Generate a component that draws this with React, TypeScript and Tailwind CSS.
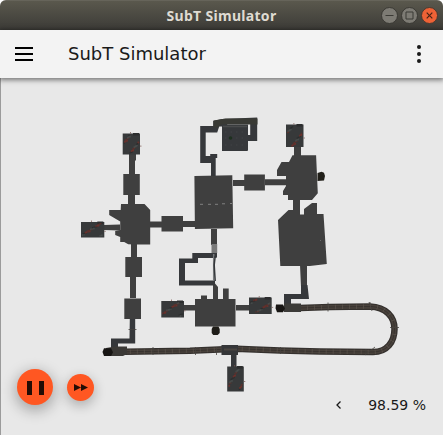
import React from "react";

const ROCK = "#3f3f3f";

// x, y, width, height of the rough cave rooms
const caves: [number, number, number, number][] = [
  [122.7, 133.5, 17.3, 21],
  [81, 222, 23.3, 15.5],
  [286, 124.5, 17.5, 22.5],
  [161.3, 301, 22.7, 16.5],
  [249, 297.5, 22.7, 16.5],
  [227.2, 366.5, 16.6, 25],
];

// Deterministic speckles inside a cave room
function Cave({ box, seed }: { box: [number, number, number, number]; seed: number }) {
  const [x, y, w, h] = box;
  const specks = Array.from({ length: 28 }, (_, i) => {
    const a = (i * 37 + seed * 17) % 101;
    const b = (i * 61 + seed * 29) % 97;
    return { px: x + 1 + (a / 101) * (w - 3), py: y + 1 + (b / 97) * (h - 3), c: ["#7a2f28", "#28292a", "#4c5150", "#66302a"][i % 4] };
  });
  return (
    <g>
      <rect x={x} y={y} width={w} height={h} fill="#37393a" />
      <rect x={x + w - 7} y={y - 0.5} width={6} height={2.5} fill="#2c2d2e" />
      {specks.map((s, i) => (
        <rect key={i} x={s.px} y={s.py} width={i % 3 ? 1.2 : 1.8} height={i % 2 ? 1.2 : 1.8} fill={s.c} opacity=".75" />
      ))}
      <path d={`M${x + w} ${y + h * 0.6}h1.5M${x + w * 0.45} ${y - 1.5}v1.5`} stroke="#7c5650" strokeWidth=".7" />
    </g>
  );
}

function CaveMap() {
  const tunnel =
    "M300 308L330 307L370 306.5C386 307 394.5 317 394.5 329C394.5 342 387 352 373 352L320 351.5L280 350.5L236 348.7L190 350.8L125 351.8";
  return (
    <svg className="block h-full w-full" viewBox="0 78 443 357" preserveAspectRatio="none">
      <g fill={ROCK}>
        {/* west column */}
        <path d="M129 154h7v6l-1 1v14h-6zM123.300 174h16.500v21h-16.500zM128 194h7v11h-7z" />
        <path d="M121 204h23.500l5.700 6v34.500h-16l-6-.3l-4-2.200h-4v-5l-5-2v-4l5-1v-8.500l-11-6.500v-5h11.500z" />
        <path d="M104 225l16-.5v6l-16-.5zM150 221.500h13v6h-13zM161.500 216h21.500v15.500h-21.500zM183 221h13v6h-13z" />
        <path d="M131 244h6v14h-6zM125.300 257h16.700v20h-16.700zM130 277h6v21h-6zM124.300 298.500h16.700v20.500h-16.700z" />
        {/* central block */}
        <path d="M194.400 176l37.900-.8l.9 53l-38.300.8zM233 180h12v6h-12zM244.200 174.500h20.700v16h-20.700zM265 179.300h22v6h-22z" />
        <path d="M211 229h6v16h-6zM213 281l5 6v13h-5z" />
        {/* south room */}
        <path d="M195 299h6v-3.500h6v3.500h16v-10.500h5.700v10.500h6.800v27.500h-40.500zM184 305h11v5.500h-11zM236 305h13.500v5.500h-13.500z" />
        {/* east rooms */}
        <path d="M294 146h7v10h-7zM292.500 155.300h23.600l1.700 38l-5.800 6.700h-24v-5h-5v-4l3-5v-10h-9v-6l4.500-8h7.500z" />
        <path d="M278 220l10.500-10h4.500v-10h7v14.500h4v-5.500l8-6h5v11h6.500l3.300 50l-17 2h-29.500zM300 265h7v22h-6z" />
      </g>
      <g fill="#36383b">
        <path d="M129.800 319h5.400v24.500h-17.200v5h-7v-10h18.500z" />
        <path d="M301 285h6.500l1.500 14h-18v6h-7v-11h17z" />
        <path fillRule="evenodd" d="M179 258.500h13.300v-5.500h24.700v4.500l-2 .5h-17v5h-13v17.500h30v5h-36z" />
        <path d="M231 354h5.500v13h-5.500z" />
        <path d="M211 176v-13h-10.800v-37h13v-5l9-2l35-1.500v23.500h-10v-6h3v-11.500h-23v3h-8l-2 6h-11.500v23.500h4.500v-2h7v4h-1.500v18z" />
      </g>
      <path d="M213.500 120.500l12-2h32v6h-36l-4 3h-4z" fill="#393a35" />
      <path d="M222 124.500h26v26l-1 .5h-25z" fill="#36383b" />
      <path d="M223 126.500h24" stroke="#4a4b4c" strokeWidth="1.500" />
      <path d="M225 132h20M225 138h20M225 145h20" stroke="#4b4c4e" strokeWidth=".6" strokeDasharray="1.500 4" />
      <circle cx="230.500" cy="138" r="1.800" fill="#1d301f" />
      <path d="M200 204.300h3M208 204.300h3M215 204.300h3M222 203.800h3M230 203.500h2" stroke="#929292" strokeWidth=".8" />
      <path d="M211.500 244h5.700v9h-5.700z" fill="#797979" />
      <path d="M213.700 254v27" stroke="#77797b" strokeWidth="1.500" />
      <path d="M215.200 256l-1 9l1 16" stroke="#34373a" strokeWidth="1.500" fill="none" />
      <path d="M320 240h.8v.8h-.8z" fill="#888" />

      {/* rail tunnel */}
      <path d={tunnel} fill="none" stroke="#35312e" strokeWidth="6.500" />
      <path d={tunnel} fill="none" stroke="#48413b" strokeWidth="4" />
      <path d={tunnel} fill="none" stroke="#38332f" strokeWidth="1" />
      <path d={tunnel} fill="none" stroke="#5c544d" strokeWidth="4.500" strokeDasharray=".7 6.300" />
      <path
        d="M328 302.500v9M369 302l3 9M390 327.500h9M375 347l-10 8M216.500 347v8M153 347v8M195.500 347v8M280.500 347v7M370 302v2M366 349v5M128.500 329.500h8"
        stroke="#45413d"
        strokeWidth=".8"
      />
      <path d="M106 348l9-1.500h12v7.500l-4 2h-17z" fill="#3b3936" />
      <path d="M284 303.500h17v8.500h-17z" fill="#3c3b38" />
      <path d="M221.500 345h16.500v10h-16.500z" fill="#353638" />
      <path d="M224 349.500h13" stroke="#4a4540" strokeWidth="2" />
      <path d="M104 348.300h7l2 4l-2 3.700h-7l-1.500-4z" fill="#171513" />
      <path d="M276 304.500h7l2 4l-2 3.700h-6l-1.500-4z" fill="#171513" />
      <path d="M213 326.500h5.500l1.200 2.500v4l-2 2h-4.500l-1.500-2v-4z" fill="#1e1c17" />
      <path d="M317.500 173l4-1.200l2.500 1l1 3.200l-1 4.500l-6.500.5z" fill="#211f19" />

      {caves.map((box, i) => (
        <Cave key={i} box={box} seed={i + 1} />
      ))}
    </svg>
  );
}

export default function App() {
  return (
    <div className="flex h-[435px] w-[443px] flex-col overflow-hidden rounded-t-[6px] bg-[#e8e8e8] font-['DejaVu_Sans',sans-serif] text-[#1a1a1a]">
      <div className="grid h-[30px] shrink-0 grid-cols-[1fr_auto_1fr] items-center border-t border-[#66645a] bg-linear-to-b from-[#5a584d] to-[#3c3b37]">
        <span />
        <h1 className="font-['Noto_Sans',sans-serif] text-[14px] leading-[20px] font-bold tracking-[0.3px] whitespace-nowrap text-[#dfdbd2]">
          SubT Simulator
        </h1>
        <div className="flex justify-end gap-[3px] pr-[5px]">
          <svg className="h-[17px] w-[17px]" viewBox="0 0 17 17" fill="none">
            <circle cx="8.500" cy="8.500" r="8" fill="#7d7b74" stroke="#3a3934" />
            <path d="M4.500 8.500h8" stroke="#3b3a35" />
          </svg>
          <svg className="h-[17px] w-[17px]" viewBox="0 0 17 17" fill="none">
            <circle cx="8.500" cy="8.500" r="8" fill="#7d7b74" stroke="#3a3934" />
            <path d="M5 5h7v7h-7z" stroke="#3b3a35" />
          </svg>
          <svg className="h-[17px] w-[17px]" viewBox="0 0 17 17" fill="none">
            <circle cx="8.500" cy="8.500" r="8" fill="#ee6236" stroke="#493a31" />
            <path d="M5.700 5.700l5.600 5.600M11.300 5.700l-5.600 5.600" stroke="#492315" strokeWidth="1.200" />
          </svg>
        </div>
      </div>

      <header className="z-10 flex h-12 shrink-0 items-center bg-[#f3f3f3] pr-[22px] pl-[15px] shadow-[0_1px_5px_1px_rgba(0,0,0,0.5)]">
        <div className="flex w-[18px] flex-col gap-1">
          <span className="h-0.5 bg-black" />
          <span className="h-0.5 bg-black" />
          <span className="h-0.5 bg-black" />
        </div>
        <h2 className="ml-[35px] flex-1 text-[18px] leading-6">SubT Simulator</h2>
        <div className="flex flex-col gap-[3px]">
          <span className="size-1 rounded-full bg-[#1a1a1a]" />
          <span className="size-1 rounded-full bg-[#1a1a1a]" />
          <span className="size-1 rounded-full bg-[#1a1a1a]" />
        </div>
      </header>

      <main className="relative min-h-0 flex-1 border-l border-[#9b9b9b]">
        <div className="-ml-px h-full w-[443px]">
          <CaveMap />
        </div>
        <div className="absolute bottom-[30px] left-4 flex items-center gap-[14px]">
          <button className="flex size-9 items-center justify-center gap-[7px] rounded-full bg-[#ff5722] pt-[2px] shadow-[0_4px_14px_2px_rgba(0,0,0,0.28)]">
            <span className="h-[14px] w-[5px] bg-[#220c05]" />
            <span className="h-[14px] w-[5px] bg-[#220c05]" />
          </button>
          <button className="flex size-[27px] items-center justify-center rounded-full bg-[#ff5722] pt-px shadow-[0_4px_12px_1px_rgba(0,0,0,0.24)]">
            <svg className="h-[7px] w-[14px]" viewBox="0 0 14 7">
              <path d="M0 0l7 3.500L0 7zM7 0l7 3.500L7 7z" fill="#220c05" />
            </svg>
          </button>
        </div>
        <div className="absolute right-[17px] bottom-5 flex items-center gap-[26px] text-[14px] leading-5">
          <svg className="h-2 w-[7px]" viewBox="0 0 7 8" fill="none">
            <path d="M5.500 .5L2 4l3.500 3.500" stroke="#1a1a1a" strokeWidth="1.300" />
          </svg>
          <span>98.59 %</span>
        </div>
      </main>
    </div>
  );
}
